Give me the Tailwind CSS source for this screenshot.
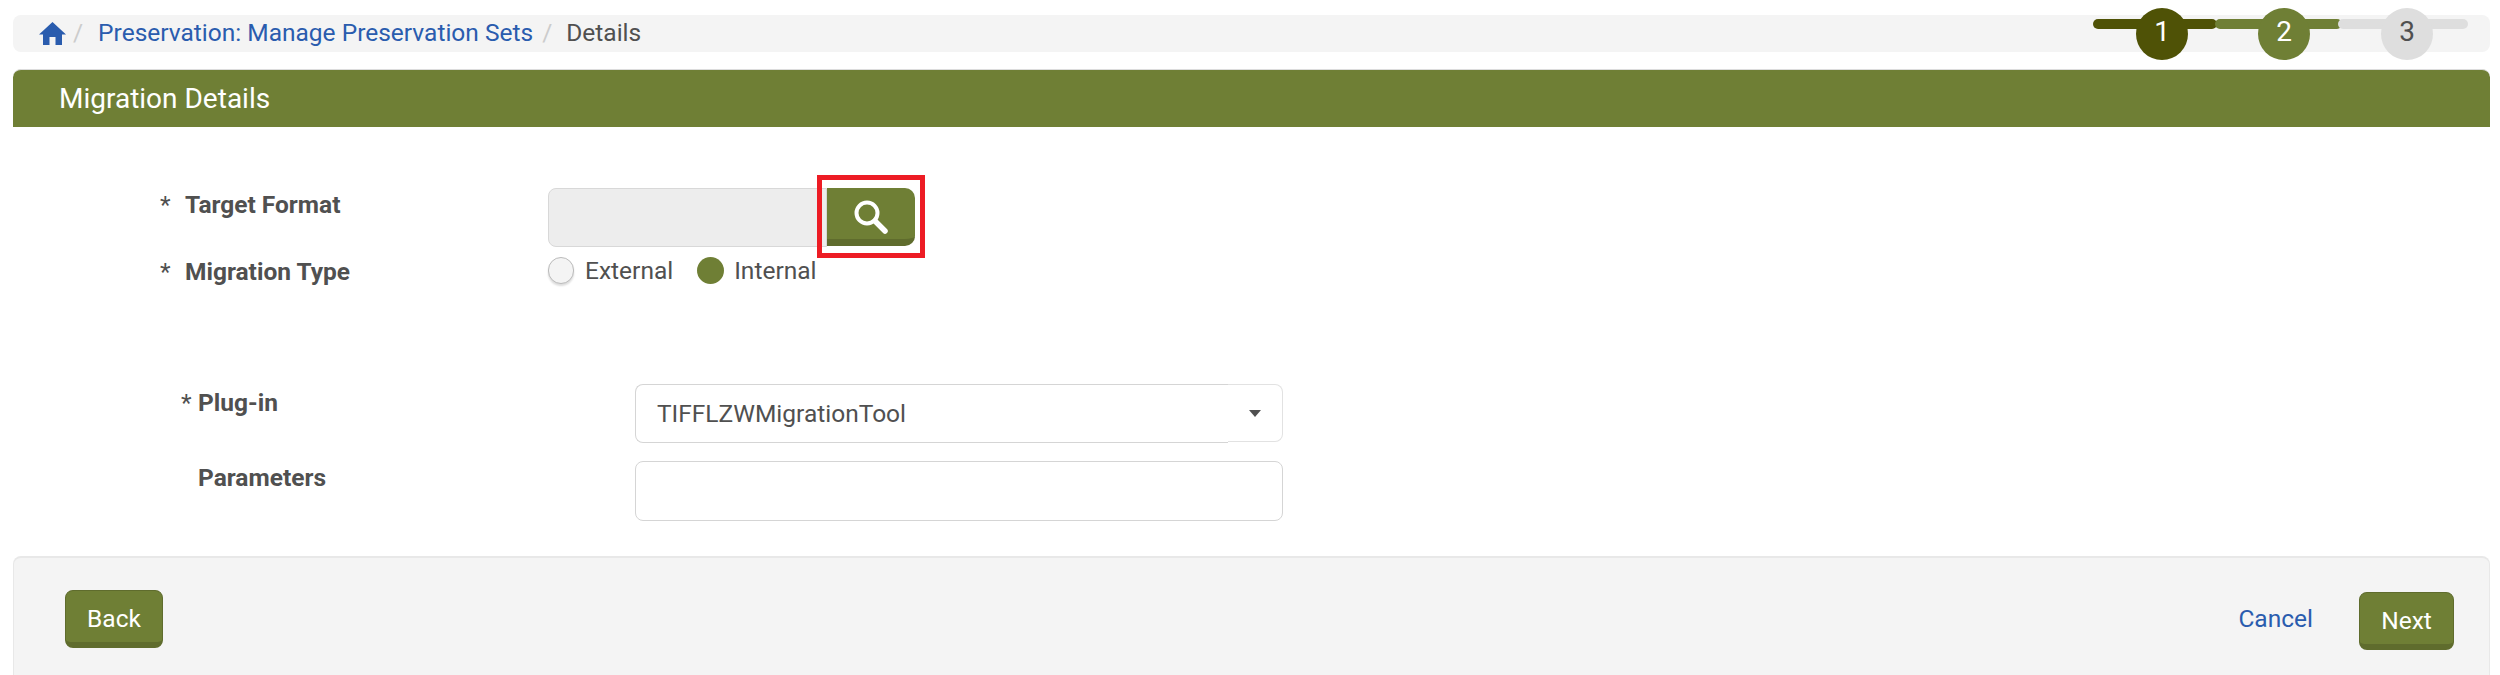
<!DOCTYPE html>
<html lang="en">
<head>
  <meta charset="UTF-8" />
  <title>Migration Details</title>
  <script src="https://cdn.jsdelivr.net/npm/@tailwindcss/browser@4"></script>
</head>
<body class="bg-white font-['Roboto',sans-serif] text-[#505050] overflow-hidden">
  <div class="w-[2500px] h-[675px] pt-[15px] pl-[13px] pr-[10px] flex flex-col">
    <!-- Breadcrumb -->
    <div class="relative h-[37px] flex-none bg-[#f4f4f4] rounded-[8px] flex items-center pl-[26px] text-[24.5px]">
      <svg class="w-[27px] h-[23px] text-[#2a5cae]" viewBox="0 0 27 23" fill="currentColor"><path d="M13.5 0 27 12.5H23V23H16.5V15H10.5V23H4V12.5H0z"/></svg>
      <span class="ml-[7px] text-[#ccc]">/</span>
      <a class="ml-[15px] text-[#2a5cae]">Preservation: Manage Preservation Sets</a>
      <span class="ml-[9px] text-[#ccc]">/</span>
      <span class="ml-[14px]">Details</span>
      <!-- Stepper -->
      <div class="absolute left-[2080px] top-[-7px] w-[375px] h-[52px] flex items-center">
        <div class="absolute left-0 top-[11px] w-[124px] h-[10px] rounded-full bg-[#4f5206]"></div>
        <div class="absolute left-[122px] top-[11px] w-[127px] h-[10px] rounded-full bg-[#6f7f35]"></div>
        <div class="absolute left-[245px] top-[11px] w-[130px] h-[10px] rounded-full bg-[#dedede]"></div>
        <div class="absolute left-[43px] top-0 w-[52px] h-[52px] rounded-full bg-[#4f5206] text-white text-[28px] flex items-center justify-center pb-[4px]">1</div>
        <div class="absolute left-[165px] top-0 w-[52px] h-[52px] rounded-full bg-[#6f7f35] text-white text-[28px] flex items-center justify-center pb-[4px]">2</div>
        <div class="absolute left-[288px] top-0 w-[52px] h-[52px] rounded-full bg-[#dedede] text-[28px] flex items-center justify-center pb-[4px]">3</div>
      </div>
    </div>

    <!-- Title bar -->
    <div class="mt-[17px] h-[58px] flex-none bg-[#6f7f35] border-t border-[#dcdcdc] rounded-t-[8px] flex items-center pl-[46px] text-white text-[28px]">Migration Details</div>

    <!-- Target format -->
    <div class="mt-[61px] flex flex-none">
      <div class="w-[535px] pl-[147px] pt-[2px] text-[24.5px] leading-[30px] font-bold flex"><span class="w-[25px] font-normal">*</span>Target Format</div>
      <div class="relative flex">
        <div class="w-[279px] h-[59px] bg-[#ededed] border border-[#d8d8d8] rounded-l-[8px]"></div>
        <button class="w-[88px] h-[58px] bg-[#6f7f35] border-b-[7px] border-[#5f6c2d] rounded-r-[10px] flex items-center justify-center">
          <svg class="w-[34px] h-[34px] mt-[7px]" viewBox="0 0 34 34" fill="none" stroke="#fff"><circle cx="13" cy="13" r="10.5" stroke-width="4"/><path d="M21 21 31 31" stroke-width="5.5" stroke-linecap="round"/></svg>
        </button>
        <div class="absolute left-[269px] top-[-13px] w-[108px] h-[83px] border-[5px] border-[#ed1c24]"></div>
      </div>
    </div>

    <!-- Migration type -->
    <div class="mt-[10px] flex flex-none">
      <div class="w-[535px] pl-[147px] text-[24.5px] leading-[30px] font-bold flex"><span class="w-[25px] font-normal">*</span>Migration Type</div>
      <div class="flex items-center h-[27px] text-[24.5px]">
        <span class="w-[26px] h-[27px] rounded-full bg-[#f4f4f4] border border-[#bbb] shadow-[0_2px_2px_#ddd]"></span>
        <span class="ml-[11px] pt-[2px]">External</span>
        <span class="ml-[24px] w-[27px] h-[27px] rounded-full bg-[#6f7f35]"></span>
        <span class="ml-[10px] pt-[2px]">Internal</span>
      </div>
    </div>

    <!-- Plug-in -->
    <div class="mt-[97px] flex flex-none">
      <div class="w-[622px] pl-[168px] pt-[4px] text-[24.5px] leading-[30px] font-bold flex"><span class="w-[17px] font-normal">*</span>Plug-in</div>
      <div class="flex items-start">
        <div class="w-[593px] h-[59px] border border-[#d5d5d5] border-r-0 rounded-l-[8px] flex items-center pl-[21px] pt-[2px] text-[24.5px]">TIFFLZWMigrationTool</div>
        <div class="w-[55px] h-[58px] border border-[#e2e2e2] border-l-0 rounded-r-[8px] flex items-center justify-center"><span class="w-0 h-0 border-x-[6.5px] border-x-transparent border-t-[7px] border-t-[#505050]"></span></div>
      </div>
    </div>

    <!-- Parameters -->
    <div class="mt-[18px] flex flex-none">
      <div class="w-[622px] pl-[185px] pt-[2px] text-[24.5px] leading-[30px] font-bold">Parameters</div>
      <div class="w-[648px] h-[60px] border border-[#d5d5d5] rounded-[8px]"></div>
    </div>

    <!-- Footer -->
    <div class="mt-[35px] flex-1 bg-[#f4f4f4] border-t-2 border-x border-[#e8e8e8] rounded-t-[8px] flex items-start pl-[51px] pr-[35px] pt-[32px] text-[24.5px]">
      <button class="w-[98px] h-[58px] pt-[6px] bg-[#6f7f35] border border-[#5f6c2d] border-b-[6px] rounded-[8px] text-white">Back</button>
      <a class="ml-auto mt-[11px] text-[#2a5cae]">Cancel</a>
      <button class="ml-[46px] mt-[2px] w-[95px] h-[58px] pt-[6px] bg-[#6f7f35] border border-[#5f6c2d] border-b-[6px] rounded-[8px] text-white">Next</button>
    </div>
  </div>
</body>
</html>
